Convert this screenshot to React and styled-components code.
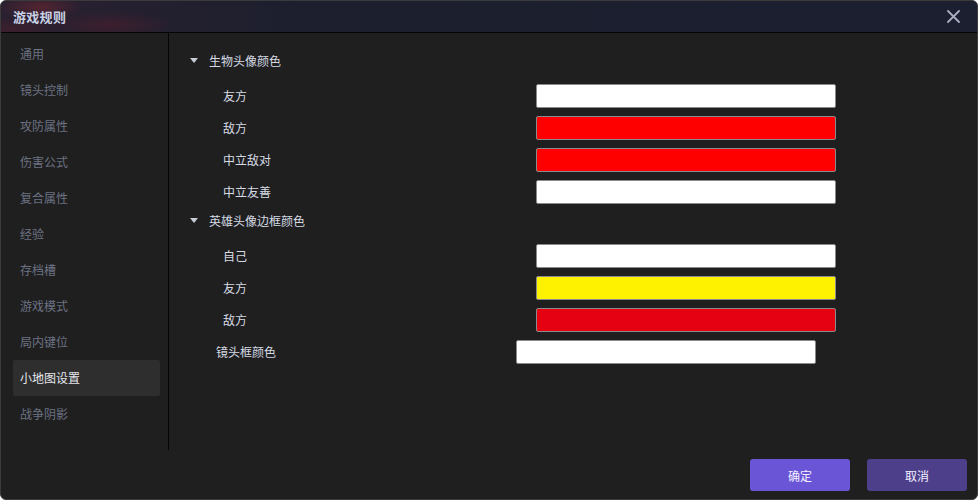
import styled, { createGlobalStyle } from "styled-components";

const Global = createGlobalStyle`
  html, body { margin: 0; padding: 0; background: #ffffff; }
  body { font-family: "Noto Sans CJK SC", "Noto Sans", sans-serif; }
  * { box-sizing: border-box; }
`;

const Dialog = styled.div`
  width: 978px;
  height: 500px;
  background: #1f1f1f;
  border: 1px solid #3b3b3b;
  border-radius: 6px;
  overflow: hidden;
  display: flex;
  flex-direction: column;
`;

const Header = styled.div`
  height: 32px;
  flex: none;
  display: flex;
  align-items: center;
  justify-content: space-between;
  padding: 0 16px 0 12px;
  border-bottom: 1px solid #050505;
  background:
    radial-gradient(ellipse 60px 18px at 40px 6px, rgba(120, 40, 50, 0.55), transparent 70%),
    radial-gradient(ellipse 90px 20px at 110px 24px, rgba(90, 30, 45, 0.45), transparent 70%),
    radial-gradient(ellipse 70px 16px at 10px 28px, rgba(80, 30, 40, 0.5), transparent 70%),
    linear-gradient(90deg, #2a2030 0%, #1d1f2e 30%, #1b1f2f 100%);
`;

const Title = styled.div`
  font-size: 13px;
  font-weight: bold;
  color: #c9d0e4;
  letter-spacing: 0.3px;
`;

const Close = styled.button`
  border: none;
  background: none;
  padding: 0;
  width: 16px;
  height: 16px;
  display: flex;
  align-items: center;
  justify-content: center;
  cursor: pointer;
`;

const Main = styled.div`
  height: 422px;
  display: flex;
`;

const Sidebar = styled.div`
  width: 168px;
  height: 417px;
  flex: none;
  padding: 3px 8px 0 12px;
  border-right: 1px solid #050505;
`;

const NavItem = styled.div`
  height: 36px;
  display: flex;
  align-items: center;
  padding-left: 7px;
  padding-bottom: 1px;
  font-size: 12px;
  border-radius: 2px;
  color: ${(p) => (p.$active ? "#e6e8ee" : "#6c7283")};
  background: ${(p) => (p.$active ? "#2e2e2e" : "transparent")};
`;

const Content = styled.div`
  flex: 1;
  padding-top: 15px;
`;

const SectionHead = styled.div`
  height: 26px;
  display: flex;
  align-items: center;
  padding-left: 21px;
  padding-bottom: 1px;
  font-size: 12px;
  color: #d6dbe6;
  margin-bottom: 6px;
`;

const Caret = styled.span`
  width: 0;
  height: 0;
  border-left: 4px solid transparent;
  border-right: 4px solid transparent;
  border-top: 5px solid #c8ccd6;
  margin-right: 11px;
`;

const Row = styled.div`
  height: 32px;
  display: flex;
  align-items: center;
  padding-left: ${(p) => p.$indent}px;
`;

const Label = styled.div`
  width: ${(p) => p.$width}px;
  font-size: 12px;
  color: #d6dbe6;
  flex: none;
  padding-bottom: 1px;
`;

const Swatch = styled.div`
  width: 300px;
  height: 24px;
  border: 1px solid #8a8a8a;
  border-radius: 2px;
  background: ${(p) => p.$color};
`;

const Footer = styled.div`
  flex: 1;
  display: flex;
  justify-content: flex-end;
  gap: 17px;
  padding: 4px 10px 0 0;
`;

const Button = styled.button`
  width: 100px;
  height: 32px;
  border: none;
  border-radius: 3px;
  font-family: inherit;
  font-size: 12px;
  color: #f2f0ff;
  background: ${(p) => (p.$primary ? "#6b55d7" : "#4e3f8b")};
  cursor: pointer;
`;

const nav = [
  "通用",
  "镜头控制",
  "攻防属性",
  "伤害公式",
  "复合属性",
  "经验",
  "存档槽",
  "游戏模式",
  "局内键位",
  "小地图设置",
  "战争阴影",
];

const creature = [
  ["友方", "#ffffff"],
  ["敌方", "#ff0000"],
  ["中立敌对", "#ff0000"],
  ["中立友善", "#ffffff"],
];

const hero = [
  ["自己", "#ffffff"],
  ["友方", "#fff200"],
  ["敌方", "#e50012"],
];

export default function App() {
  return (
    <>
      <Global />
      <Dialog>
        <Header>
          <Title>游戏规则</Title>
          <Close aria-label="close">
            <svg width="13" height="13" viewBox="0 0 13 13">
              <path d="M1 1L12 12M12 1L1 12" stroke="#a9aec0" strokeWidth="1.8" strokeLinecap="round" />
            </svg>
          </Close>
        </Header>
        <Main>
          <Sidebar>
            {nav.map((n) => (
              <NavItem key={n} $active={n === "小地图设置"}>
                {n}
              </NavItem>
            ))}
          </Sidebar>
          <Content>
            <SectionHead>
              <Caret />
              生物头像颜色
            </SectionHead>
            {creature.map(([l, c]) => (
              <Row key={l} $indent={54}>
                <Label $width={313}>{l}</Label>
                <Swatch $color={c} />
              </Row>
            ))}
            <SectionHead>
              <Caret />
              英雄头像边框颜色
            </SectionHead>
            {hero.map(([l, c]) => (
              <Row key={l} $indent={54}>
                <Label $width={313}>{l}</Label>
                <Swatch $color={c} />
              </Row>
            ))}
            <Row $indent={47}>
              <Label $width={300}>镜头框颜色</Label>
              <Swatch $color="#ffffff" />
            </Row>
          </Content>
        </Main>
        <Footer>
          <Button $primary>确定</Button>
          <Button>取消</Button>
        </Footer>
      </Dialog>
    </>
  );
}
